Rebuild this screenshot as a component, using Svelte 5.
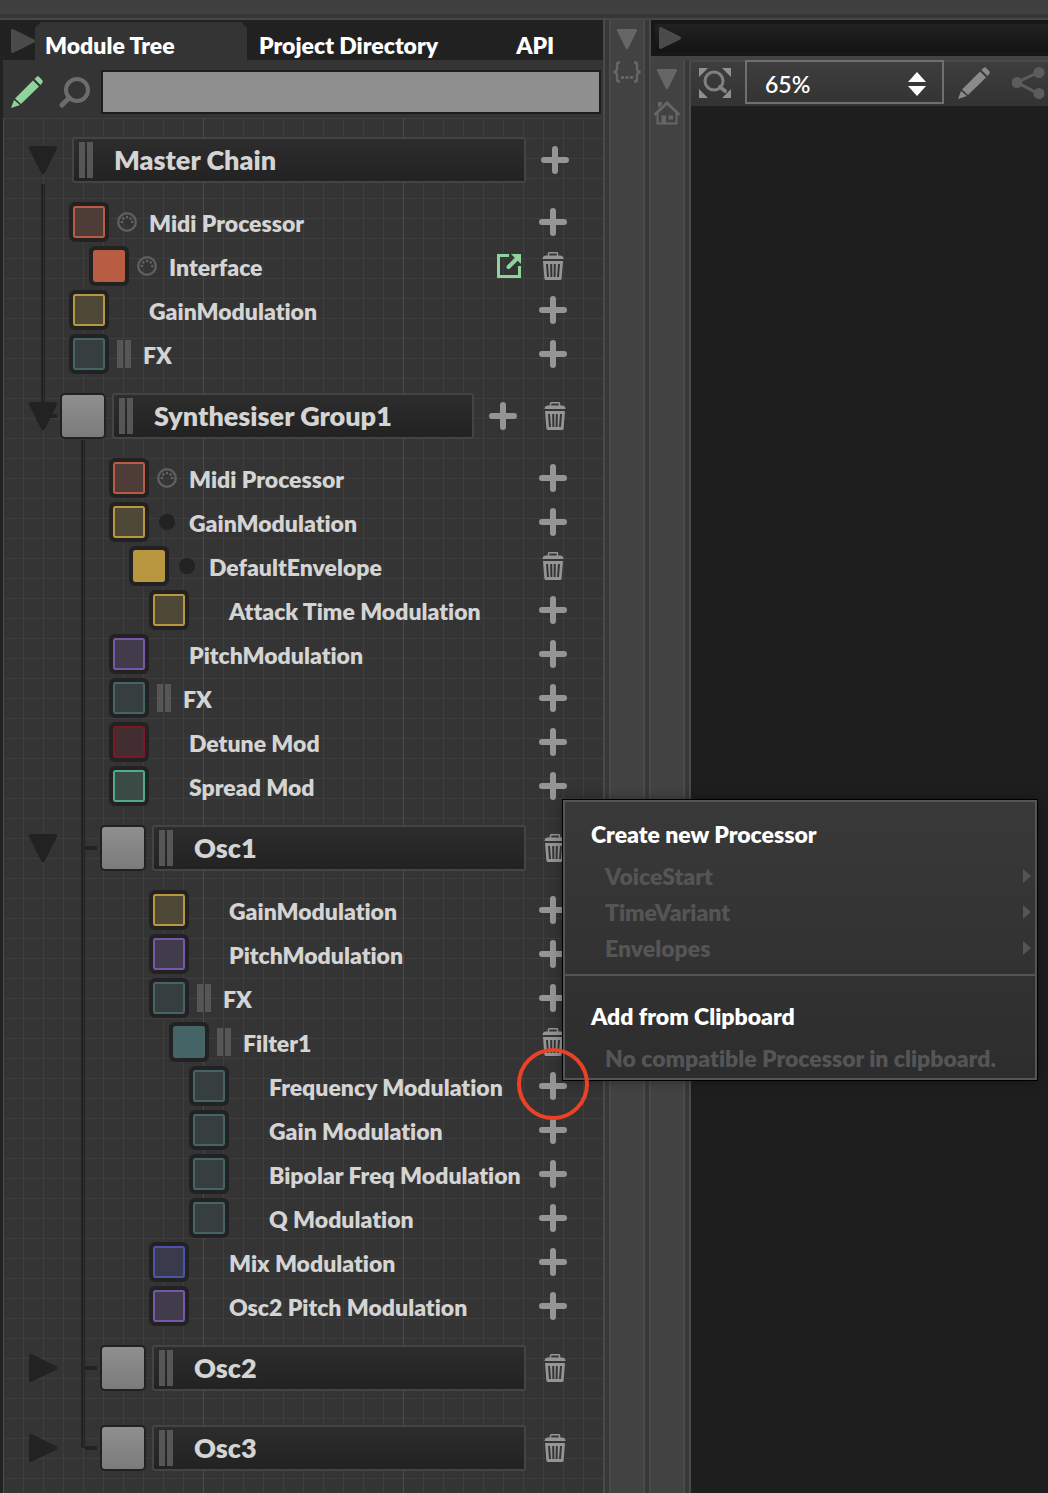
<script lang="ts">
  type Slot = 'midi' | 'dot' | 'bars' | 'none';
  type Action = 'add' | 'delete' | 'open';

  interface Row {
    name: string;
    level: number;
    color: string;
    slot: Slot;
    actions: Action[];
    solid?: boolean;
    marked?: boolean;
  }

  interface Group {
    name: string;
    open: boolean;
    actions: Action[];
    rows: Row[];
    groups: Group[];
  }

  const ORANGE = '#b85d41';
  const YELLOW = '#b89740';
  const TEAL = '#446466';
  const PURPLE = '#7559a8';
  const RED = '#7a1825';
  const GREEN = '#53a98b';
  const BLUE = '#4c54a8';

  function row(name: string, level: number, color: string, slot: Slot = 'none', extra: Partial<Row> = {}): Row {
    return { name, level, color, slot, actions: ['add'], ...extra };
  }

  let master: Group = $state({
    name: 'Master Chain',
    open: true,
    actions: ['add'],
    rows: [
      row('Midi Processor', 0, ORANGE, 'midi'),
      row('Interface', 1, ORANGE, 'midi', { solid: true, actions: ['open', 'delete'] }),
      row('GainModulation', 0, YELLOW),
      row('FX', 0, TEAL, 'bars')
    ],
    groups: [
      {
        name: 'Synthesiser Group1',
        open: true,
        actions: ['add', 'delete'],
        rows: [
          row('Midi Processor', 2, ORANGE, 'midi'),
          row('GainModulation', 2, YELLOW, 'dot'),
          row('DefaultEnvelope', 3, YELLOW, 'dot', { solid: true, actions: ['delete'] }),
          row('Attack Time Modulation', 4, YELLOW),
          row('PitchModulation', 2, PURPLE),
          row('FX', 2, TEAL, 'bars'),
          row('Detune Mod', 2, RED),
          row('Spread Mod', 2, GREEN)
        ],
        groups: [
          {
            name: 'Osc1',
            open: true,
            actions: ['delete'],
            rows: [
              row('GainModulation', 4, YELLOW),
              row('PitchModulation', 4, PURPLE),
              row('FX', 4, TEAL, 'bars'),
              row('Filter1', 5, TEAL, 'bars', { solid: true, actions: ['delete'] }),
              row('Frequency Modulation', 6, TEAL, 'none', { marked: true }),
              row('Gain Modulation', 6, TEAL),
              row('Bipolar Freq Modulation', 6, TEAL),
              row('Q Modulation', 6, TEAL),
              row('Mix Modulation', 4, BLUE),
              row('Osc2 Pitch Modulation', 4, PURPLE)
            ],
            groups: []
          },
          { name: 'Osc2', open: false, actions: ['delete'], rows: [], groups: [] },
          { name: 'Osc3', open: false, actions: ['delete'], rows: [], groups: [] }
        ]
      }
    ]
  });

  const tabs = ['Module Tree', 'Project Directory', 'API'];
  let activeTab = $state('Module Tree');
  const createItems = ['VoiceStart', 'TimeVariant', 'Envelopes'];
</script>

{#snippet bars()}
  <span class="bars"></span>
{/snippet}

{#snippet triangle(size: number)}
  <svg class="triangle" width={size} height={size} viewBox="0 0 28 28" aria-hidden="true">
    <path d="M2 2 26 14 2 26Z" fill="currentColor" stroke="currentColor" stroke-width="4" stroke-linejoin="round" />
  </svg>
{/snippet}

{#snippet pencil()}
  <svg width="32" height="32" viewBox="0 0 32 32" aria-hidden="true">
    <path d="M0 32 3 24 9 29Z M4 22.500 22 4.500 28 10.500 10 28Z M23.500 3 26 .500Q27 0 28 .800L31.500 4.500Q32 5.500 31.500 6.500L29.500 9Z" fill="currentColor" />
  </svg>
{/snippet}

{#snippet actionIcon(action: Action)}
  {#if action === 'add'}
    <svg width="28" height="28" viewBox="0 0 28 28" aria-hidden="true">
      <path d="M14 3V25M3 14H25" stroke="#959595" stroke-width="6" stroke-linecap="round" />
    </svg>
  {:else if action === 'delete'}
    <svg width="28" height="28" viewBox="0 0 28 28" aria-hidden="true">
      <path d="M9.500 4V1.500Q9.500 .800 10.200 .800H17.800Q18.500 .800 18.500 1.500V4" fill="none" stroke="#959595" stroke-width="1.500" />
      <path d="M3.500 7Q3.500 3.500 7 3.500H21Q24.500 3.500 24.500 7Z" fill="#959595" />
      <path d="M4 9H24L22.600 26.500Q22.500 28 21 28H7Q5.500 28 5.400 26.500Z" fill="#959595" />
      <path d="M8 12 9 25M12.200 12 12.400 25M15.800 12 15.600 25M20 12 19 25" stroke="#343434" stroke-width="2" />
    </svg>
  {:else}
    <svg width="24" height="24" viewBox="0 0 24 24" aria-hidden="true">
      <path d="M12 1.500H1.500V22.500H22.500V12" fill="none" stroke="#8ed49c" stroke-width="3" />
      <path d="M11.500 13 19 5.500" stroke="#8ed49c" stroke-width="4" stroke-linecap="round" />
      <path d="M14 0H24V10Z" fill="#8ed49c" />
    </svg>
  {/if}
{/snippet}

{#snippet popup()}
  <div class="popup">
    <h2>Create new Processor</h2>
    {#each createItems as item}
      <button class="item" disabled>
        {item}
        <svg width="8" height="14" viewBox="0 0 8 14" aria-hidden="true"><path d="M0 0 8 7 0 14Z" fill="currentColor" /></svg>
      </button>
    {/each}
    <hr />
    <h2>Add from Clipboard</h2>
    <button class="item" disabled>No compatible Processor in clipboard.</button>
  </div>
{/snippet}

{#snippet rowView(r: Row)}
  <div class="row" style="--level: {r.level}">
    <span class="swatch" class:solid={r.solid} style="--color: {r.color}"></span>
    {#if r.slot === 'bars'}
      {@render bars()}
    {:else}
      <span class="slot">
        {#if r.slot === 'midi'}
          <svg width="20" height="20" viewBox="0 0 20 20" aria-hidden="true">
            <circle cx="10" cy="10" r="8.800" fill="none" stroke="#5e5e5e" stroke-width="2.400" />
            <g fill="#666">
              <circle cx="4.800" cy="10" r="1.200" />
              <circle cx="6.300" cy="6.500" r="1.200" />
              <circle cx="10" cy="5" r="1.200" />
              <circle cx="13.700" cy="6.500" r="1.200" />
              <circle cx="15.200" cy="10" r="1.200" />
            </g>
          </svg>
        {:else if r.slot === 'dot'}
          <span class="dot"></span>
        {/if}
      </span>
    {/if}
    <span class="name">{r.name}</span>
    {#each r.actions as action}
      <span class="anchor">
        <button class="icon" aria-label="{action} {r.name}">{@render actionIcon(action)}</button>
        {#if r.marked}
          {@render popup()}
          <span class="marker"></span>
        {/if}
      </span>
    {/each}
  </div>
{/snippet}

{#snippet groupView(g: Group, depth: number, last: boolean)}
  <section class="group" style="--depth: {depth}">
    {#if depth > 0}
      <span class="rail" class:last></span>
      <span class="tick"></span>
    {/if}
    <header class="group-head" class:root={depth === 0}>
      <button class="icon fold" class:open={g.open} aria-label="Toggle {g.name}" onclick={() => (g.open = !g.open)}>
        {@render triangle(28)}
      </button>
      <div class="head-body">
        {#if depth > 0}
          <span class="power"></span>
        {/if}
        <div class="title">
          {@render bars()}
          <span>{g.name}</span>
        </div>
      </div>
      <div class="head-actions">
        {#each g.actions as action}
          <button class="icon" aria-label="{action} {g.name}">{@render actionIcon(action)}</button>
        {/each}
      </div>
    </header>
    {#if g.open}
      <div class="rows" class:railed={g.groups.length > 0}>
        {#each g.rows as r}
          {@render rowView(r)}
        {/each}
      </div>
      {#each g.groups as child, i}
        {@render groupView(child, depth + 1, i === g.groups.length - 1)}
      {/each}
    {/if}
  </section>
{/snippet}

<div class="app">
  <div class="topbar"></div>
  <div class="main">
    <div class="browser">
      <nav class="tabs">
        <button class="icon play" aria-label="Fold panel">{@render triangle(24)}</button>
        {#each tabs as tab}
          <button class="tab" class:active={activeTab === tab} onclick={() => (activeTab = tab)}>{tab}</button>
        {/each}
      </nav>
      <div class="search">
        <button class="icon edit" aria-label="Edit">{@render pencil()}</button>
        <label for="search" aria-label="Search">
          <svg width="32" height="32" viewBox="0 0 32 32" aria-hidden="true">
            <circle cx="18" cy="14" r="11" fill="none" stroke="#6c6c6c" stroke-width="4" />
            <path d="M10 22 3 29" stroke="#6c6c6c" stroke-width="5" stroke-linecap="round" />
          </svg>
        </label>
        <input id="search" type="text" />
      </div>
      <div class="tree">
        {@render groupView(master, 0, true)}
      </div>
    </div>

    <div class="divider"></div>
    <div class="strip">
      <button class="icon down" aria-label="Unfold">{@render triangle(20)}</button>
      <button class="icon code" aria-label="Code editor">
        <svg width="28" height="22" viewBox="0 0 28 22" aria-hidden="true">
          <g fill="none" stroke="currentColor" stroke-width="2.500">
            <path d="M7 1.500H6Q4 1.500 4 4V8Q4 10.500 .500 11 4 11.500 4 14V18Q4 20.500 6 20.500H7" />
            <path d="M21 1.500H22Q24 1.500 24 4V8Q24 10.500 27.500 11 24 11.500 24 14V18Q24 20.500 22 20.500H21" />
          </g>
          <path d="M8 15H11V18H8ZM12.500 15H15.500V18H12.500ZM17 15H20V18H17Z" fill="currentColor" />
        </svg>
      </button>
    </div>
    <div class="divider"></div>

    <div class="workspace">
      <div class="titlebar">
        <button class="icon play" aria-label="Fold workspace">{@render triangle(22)}</button>
      </div>
      <div class="work-body">
        <div class="strip">
          <button class="icon down" aria-label="Unfold">{@render triangle(20)}</button>
          <button class="icon home" aria-label="Home">
            <svg width="28" height="24" viewBox="0 0 28 24" aria-hidden="true">
              <path d="M1.500 14 14 2 26.500 14" fill="none" stroke="currentColor" stroke-width="3" />
              <path d="M4.500 12V22.500H23.500V12" fill="none" stroke="currentColor" stroke-width="2" />
              <path d="M5 1H9V4L5 7ZM8.500 14.500H13V22H8.500ZM15.500 14.500H20V18.500H15.500Z" fill="currentColor" />
            </svg>
          </button>
        </div>
        <div class="divider"></div>
        <div class="canvas-pane">
          <div class="canvas-bar">
            <button class="icon" aria-label="Zoom to fit">
              <svg width="32" height="30" viewBox="0 0 32 30" aria-hidden="true">
                <path d="M0 0H9L0 9ZM23 0H32V9ZM0 21V30H9ZM32 21V30H23Z" fill="#909090" />
                <circle cx="15" cy="13" r="9" fill="none" stroke="#808080" stroke-width="3" />
                <path d="M21 19 26 23" stroke="#808080" stroke-width="4" stroke-linecap="round" />
              </svg>
            </button>
            <div class="zoom">
              <select aria-label="Zoom">
                <option>65%</option>
                <option>100%</option>
              </select>
              <svg width="18" height="24" viewBox="0 0 18 24" aria-hidden="true">
                <path d="M0 10 9 0 18 10ZM0 14H18L9 24Z" fill="#fff" />
              </svg>
            </div>
            <button class="icon pen" aria-label="Edit interface">{@render pencil()}</button>
            <button class="icon share" aria-label="Share">
              <svg width="34" height="32" viewBox="0 0 34 32" aria-hidden="true">
                <path d="M27 5 5 15.500 27 27" fill="none" stroke="currentColor" stroke-width="3" />
                <circle cx="5" cy="15.500" r="5.500" fill="currentColor" />
                <circle cx="27" cy="5.500" r="5.500" fill="currentColor" />
                <circle cx="27" cy="26.500" r="5.500" fill="currentColor" />
              </svg>
            </button>
          </div>
          <div class="canvas"></div>
        </div>
      </div>
    </div>
  </div>
</div>

<style>
  :global(body) {
    margin: 0;
    background: #343434;
  }

  .app {
    display: flex;
    flex-direction: column;
    min-height: 100vh;
    box-sizing: border-box;
    overflow: hidden;
    color: #d4d4d4;
    font-family: Lato, "Liberation Sans", sans-serif;
    font-size: 23px;
    font-weight: 800;
    font-variant-ligatures: none;
    line-height: 28px;
  }

  .app :global(svg) {
    display: block;
    flex: none;
  }

  button,
  input,
  select {
    margin: 0;
    padding: 0;
    border: 0;
    background: none;
    color: inherit;
    font: inherit;
  }

  .icon {
    display: flex;
    align-items: center;
    justify-content: center;
    flex: none;
  }

  .topbar {
    height: 14px;
    border-bottom: 4px solid #363636;
    background: #404040;
    box-shadow: 0 2px 0 #474747;
    margin-bottom: 2px;
  }

  .main {
    display: flex;
    flex: 1;
    border-left: 3px solid #222;
  }

  /* Module browser */
  .browser {
    display: flex;
    flex-direction: column;
    flex: 0 0 600px;
    min-width: 0;
    background: #343434;
  }

  .tabs {
    display: flex;
    height: 40px;
    box-sizing: border-box;
    padding: 2px 0 0 8px;
    background: #212121;
    color: #fff;
  }

  .play {
    color: #4b4b4b;
  }

  .tab {
    flex: none;
    padding: 8px 12px 0;
    margin-right: 54px;
    text-align: left;
    white-space: nowrap;
  }

  .tab.active {
    width: 212px;
    padding-left: 10px;
    margin-right: 0;
    background: #343434;
    clip-path: polygon(0 6px, 6px 0, 206px 0, 212px 6px, 212px 100%, 0 100%);
  }

  .search {
    display: flex;
    align-items: center;
    height: 58px;
    box-sizing: border-box;
    padding: 6px 2px 0 8px;
  }

  .search label {
    margin: 0 10px 0 16px;
  }

  .edit {
    color: #8ed49c;
  }

  .search input {
    flex: 1;
    min-width: 0;
    height: 44px;
    box-sizing: border-box;
    border: 2px solid #1d1d1d;
    background: #8f8f8f;
    color: #222;
    padding: 0 8px;
  }

  .tree {
    flex: 1;
    padding-top: 2px;
    background-image:
      linear-gradient(90deg, #4b4b4b 1px, transparent 1px),
      linear-gradient(90deg, #3e3e3e 1px, transparent 1px),
      linear-gradient(#3e3e3e 1px, transparent 1px);
    background-size: 200px 100%, 20px 100%, 100% 20px;
  }

  .group {
    position: relative;
  }

  .group-head {
    position: relative;
    display: flex;
    align-items: center;
    height: 80px;
    padding: 0 34px 0 26px;
  }

  .fold {
    color: #222;
  }

  .fold.open :global(svg),
  .down :global(svg) {
    transform: rotate(90deg);
  }

  .head-body {
    display: flex;
    flex: 1;
    gap: 6px;
    margin-left: calc(var(--depth) * 40px - 37px);
  }

  .root .head-body {
    margin-left: 15px;
  }

  .power {
    width: 46px;
    height: 46px;
    box-sizing: border-box;
    border: 2px solid #222;
    border-radius: 5px;
    background: linear-gradient(#8f8f8f, #7b7b7b);
  }

  .title {
    display: flex;
    flex: 1;
    align-items: center;
    height: 46px;
    box-sizing: border-box;
    gap: 21px;
    padding-left: 5px;
    border: 2px solid #444;
    border-radius: 3px;
    background: linear-gradient(#2d2d2d, #222);
    font-size: 27px;
  }

  .title .bars {
    height: 36px;
  }

  .bars {
    width: 14px;
    height: 28px;
    background: linear-gradient(90deg, #565656 6px, transparent 6px 8px, #565656 8px);
  }

  .head-actions {
    display: flex;
    gap: 24px;
    margin-left: 15px;
  }

  /* Connector lines between a group and its children */
  .rail,
  .railed::before {
    content: '';
    position: absolute;
    top: 0;
    left: calc(var(--depth) * 40px - 2px);
    width: 4px;
    height: 100%;
    box-sizing: border-box;
    border: solid #222;
    border-width: 0 1px 0 2px;
    background: #2c2c2c;
  }

  .rail.last {
    height: 40px;
  }

  .railed::before {
    top: -16px;
    left: calc(var(--depth) * 40px + 38px);
    height: calc(100% + 16px);
  }

  .tick {
    position: absolute;
    top: 38px;
    left: calc(var(--depth) * 40px + 2px);
    width: 12px;
    height: 4px;
    background: #222;
  }

  .rows {
    position: relative;
  }

  .row {
    display: flex;
    align-items: center;
    height: 44px;
    padding-right: 36px;
    padding-left: calc(var(--level) * 20px + 66px);
  }

  .swatch {
    width: 32px;
    height: 32px;
    margin: 0 12px 0 4px;
    box-sizing: border-box;
    border: 2px solid var(--color);
    border-radius: 2px;
    outline: 4px solid #222;
    background: color-mix(in srgb, var(--color) 20%, #343434);
  }

  .swatch.solid {
    background: var(--color);
  }

  .slot {
    display: flex;
    align-items: center;
    justify-content: center;
    width: 20px;
  }

  .dot {
    width: 16px;
    height: 16px;
    border-radius: 50%;
    background: #222;
  }

  .name {
    flex: 1;
    margin-left: 12px;
    padding-top: 2px;
    white-space: nowrap;
  }

  .anchor {
    position: relative;
    margin-left: 18px;
  }

  .name + .anchor {
    margin-left: 0;
  }

  .marker {
    position: absolute;
    z-index: 11;
    top: -24px;
    left: -22px;
    width: 72px;
    height: 72px;
    box-sizing: border-box;
    border: 4px solid #ea4127;
    border-radius: 50%;
    pointer-events: none;
  }

  /* Context menu */
  .popup {
    position: absolute;
    z-index: 10;
    bottom: 20px;
    left: 24px;
    width: 474px;
    box-sizing: border-box;
    padding: 8px 0 2px;
    border: 2px solid #555;
    outline: 1px solid #000;
    background: linear-gradient(#393939, #2d2d2d);
    box-shadow: 0 0 12px rgba(0, 0, 0, 0.4);
  }

  .popup h2 {
    height: 48px;
    margin: 0;
    padding-left: 26px;
    color: #fff;
    font-size: 23px;
    font-weight: 800;
    line-height: 48px;
  }

  .item {
    display: flex;
    align-items: center;
    justify-content: space-between;
    width: 100%;
    height: 36px;
    padding: 0 4px 0 40px;
    color: #555;
    white-space: nowrap;
  }

  .popup hr {
    height: 2px;
    margin: 8px 0 16px;
    border: 0;
    background: #555;
  }

  /* Right-hand area */
  .divider {
    flex: 0 0 4px;
    border: solid #4a4a4a;
    border-width: 0 2px;
    background: #383838;
  }

  .divider:first-of-type {
    flex-basis: 4px;
  }

  .strip {
    display: flex;
    flex-direction: column;
    align-items: center;
    flex: 0 0 32px;
    gap: 12px;
    padding-top: 9px;
    background: #424242;
    color: #666;
  }

  .workspace {
    display: flex;
    flex: 1;
    flex-direction: column;
    min-width: 0;
    background: #434343;
  }

  .titlebar {
    display: flex;
    align-items: center;
    height: 36px;
    margin-bottom: 4px;
    box-sizing: border-box;
    padding-left: 4px;
    border: 4px solid #171717;
    border-right: 0;
    background: linear-gradient(#222, #131313);
  }

  .work-body {
    display: flex;
    flex: 1;
  }

  .canvas-pane {
    display: flex;
    flex: 1;
    flex-direction: column;
    min-width: 0;
  }

  .canvas-bar {
    display: flex;
    align-items: center;
    height: 46px;
    box-sizing: border-box;
    padding: 0 2px 0 8px;
    background: linear-gradient(#3e3e3e, #333);
    box-shadow: inset 0 2px 0 #484848;
  }

  .zoom {
    display: flex;
    align-items: center;
    align-self: flex-start;
    width: 200px;
    height: 44px;
    box-sizing: border-box;
    margin: 0 14px;
    padding: 4px 16px 0 0;
    border: 2px solid #707070;
    color: #fff;
    font-weight: 600;
  }

  .zoom select {
    flex: 1;
    height: 36px;
    padding-left: 18px;
    appearance: none;
  }

  .pen {
    color: #8a8a8a;
  }

  .share {
    margin-left: 22px;
    color: #5c5c5c;
  }

  .canvas {
    flex: 1;
    background: #1e1e1e;
  }
</style>
